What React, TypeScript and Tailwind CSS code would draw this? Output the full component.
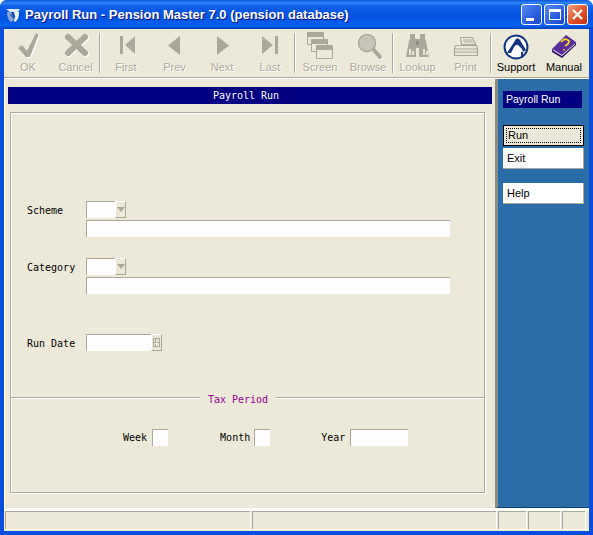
import type { ReactNode } from "react";

const mono = "font-['DejaVu_Sans_Mono',monospace] text-[10px] leading-[12px]";
const GREY = "#aca899";

function ToolItem({ x, w, label, on, children }: { x: number; w: number; label: string; on?: boolean; children: ReactNode }) {
  return (
    <div className="flex flex-col items-center" style={{ width: w }}>
      <svg width={w} height={32} viewBox={`${x} 30 ${w} 32`} className="shrink-0">
        {children}
      </svg>
      <span
        className={
          on
            ? "text-[11px] leading-[13px] whitespace-nowrap text-black"
            : "text-[11px] leading-[13px] whitespace-nowrap text-[#aca899] [text-shadow:1px_1px_0_#fff]"
        }
      >
        {label}
      </span>
    </div>
  );
}

function Sep() {
  return <div className="mt-[4px] h-[40px] w-[2px] shrink-0 border-l border-[#aca899] bg-white" />;
}

function Toolbar() {
  const check = "M18 49 L22 46 L27 52 L36 34 L38.500 36 L30 58 L26 58z";
  return (
    <div className="flex h-[48px] shrink-0 bg-[#ece9d8]">
      <ToolItem x={4} w={48} label="OK">
        <path d={check} fill="#fff" transform="translate(1 1)" />
        <path d={check} fill={GREY} />
      </ToolItem>
      <ToolItem x={52} w={47} label="Cancel">
        <path d="M68 38 L85 54 M85 38 L68 54" fill="none" stroke="#fff" strokeWidth="6" strokeLinecap="round" transform="translate(1 1)" />
        <path d="M68 38 L85 54 M85 38 L68 54" fill="none" stroke={GREY} strokeWidth="6" strokeLinecap="round" />
      </ToolItem>
      <Sep />
      <ToolItem x={101} w={50} label="First">
        <path d="M120 37h3v18h-3z M135 37v18l-10-9z" fill={GREY} />
      </ToolItem>
      <ToolItem x={151} w={47} label="Prev">
        <path d="M180 37v19l-12-9.5z" fill={GREY} />
      </ToolItem>
      <ToolItem x={198} w={48} label="Next">
        <path d="M217 37v19l12-9.5z" fill={GREY} />
      </ToolItem>
      <ToolItem x={246} w={48} label="Last">
        <path d="M262 37v18l11-9z M275 37h3v18h-3z" fill={GREY} />
      </ToolItem>
      <Sep />
      <ToolItem x={296} w={48} label="Screen">
        <g stroke={GREY} strokeWidth="1">
          <path d="M307.500 33.500h16v12h-16z" fill="#ece9d8" />
          <path d="M307.500 33.500h16v4h-16z" fill={GREY} />
          <path d="M311.500 40.500h16v12h-16z" fill="#ece9d8" />
          <path d="M311.500 40.500h16v4h-16z" fill={GREY} />
          <path d="M316.500 46.500h16v13h-16z" fill="#ece9d8" />
          <path d="M316.500 46.500h16v4h-16z" fill={GREY} />
        </g>
      </ToolItem>
      <ToolItem x={344} w={48} label="Browse">
        <path d="M374 51 L380 58" stroke="#fff" strokeWidth="4" strokeLinecap="round" transform="translate(1 1)" />
        <path d="M374 51 L380 58" stroke={GREY} strokeWidth="4" strokeLinecap="round" />
        <circle cx="367" cy="44" r="8.500" fill="#c8c5b6" stroke={GREY} strokeWidth="1.500" />
      </ToolItem>
      <Sep />
      <ToolItem x={395} w={47} label="Lookup">
        <path d="M411 35h5v5h5v-5h5v5l1 2 3 16h-10v-9h-3v9h-10l3-16 1-2z" fill={GREY} />
        <path d="M417 42h3v4h-3z" fill="#8f8b7c" />
        <path d="M410 50h2v6h-2z M413 52h2v4h-2z M424 50h2v6h-2z M427 52h2v4h-2z" fill="#ece9d8" />
      </ToolItem>
      <ToolItem x={442} w={49} label="Print">
        <path d="M461.500 38.500h12l3 7h-14z" fill="#ece9d8" stroke={GREY} strokeWidth="1.200" />
        <path d="M456.500 46.500h21l1 3v7h-23v-7z" fill="#ece9d8" stroke={GREY} strokeWidth="1.200" />
        <path d="M464 41h9M465 43h9M456 50h22M456 53h22" stroke={GREY} />
      </ToolItem>
      <Sep />
      <ToolItem x={492} w={48} label="Support" on>
        <circle cx="516" cy="48" r="11.500" fill="#fff" stroke="#12337f" strokeWidth="2" />
        <path d="M507 54 L516 40 Q518 38 520 41 L526 51 L523 53 L522 50 L518 46 Q516 45 514 48 L511 54z" fill="#12337f" />
        <path d="M521 53h2v6h-2z" fill="#12337f" />
      </ToolItem>
      <ToolItem x={540} w={48} label="Manual" on>
        <path d="M552 50 L566 36 L576 43 L562 56z" fill="#5b2d9c" />
        <path d="M552 50 L562 56 L576 43 V46 L562 59 L552 53z" fill="#2e1463" />
        <path d="M553 51 L562 56.500 L575 45" fill="none" stroke="#e8e0f0" />
        <path d="M561 43 Q565 38 569 42 Q569 45 565 47 M564 50 v1.500" fill="none" stroke="#f5d21f" strokeWidth="1.800" />
      </ToolItem>
    </div>
  );
}

function TitleBar() {
  return (
    <div className="flex h-[29px] shrink-0 items-center rounded-t-[7px] bg-[linear-gradient(180deg,#0a55d8_0%,#2f86fa_10%,#0d5fe8_22%,#0052e0_60%,#0463f0_88%,#003fc0_100%)] pl-[5px] pr-[5px]">
      <svg width="16" height="16" viewBox="0 0 16 16" className="shrink-0">
        <path d="M1 2h14l-2 3H5z" fill="#dfe8f6" />
        <path d="M2 5h4l3 8-3 2C3 13 2 9 2 5z" fill="#8ea8d4" />
        <path d="M9 5h5c0 5-1 8-4 10l-1-1c1-3 1-6 0-9z" fill="#f2f5fb" />
        <path d="M5 7l4 5M7 5l3 5" stroke="#1d3f94" strokeWidth="1" />
      </svg>
      <span className="ml-[4px] pt-[1px] font-['Liberation_Sans',sans-serif] text-[13px] font-bold whitespace-nowrap text-white [text-shadow:1px_1px_0_#0f1089]">
        Payroll Run - Pension Master 7.0 (pension database)
      </span>
      <div className="ml-auto flex gap-[2px]">
        <div className="relative h-[21px] w-[21px] rounded-[3px] border border-white bg-[linear-gradient(135deg,#5a8bf0,#2a5fe0_60%,#1c46c8)]">
          <div className="absolute bottom-[3px] left-[4px] h-[3px] w-[8px] bg-white" />
        </div>
        <div className="flex h-[21px] w-[21px] items-center justify-center rounded-[3px] border border-white bg-[linear-gradient(135deg,#5a8bf0,#2a5fe0_60%,#1c46c8)]">
          <div className="h-[11px] w-[12px] border border-t-[3px] border-white" />
        </div>
        <div className="flex h-[21px] w-[21px] items-center justify-center rounded-[3px] border border-white bg-[linear-gradient(135deg,#f0a080,#e0502a_55%,#c03010)]">
          <svg width="13" height="13" viewBox="0 0 13 13">
            <path d="M2 2 L11 11 M11 2 L2 11" stroke="#fff" strokeWidth="2.400" />
          </svg>
        </div>
      </div>
    </div>
  );
}

function Input({ w }: { w: string }) {
  return <div className={`h-[17px] border-t border-l border-[#aca899] bg-[#fefefe] ${w}`} />;
}

function ArrowBtn() {
  return (
    <div className="flex h-[17px] w-[11px] items-center justify-center border border-[#aca899] border-t-white border-l-white bg-[#ece9d8]">
      <div className="h-0 w-0 border-x-[4px] border-t-[5px] border-x-transparent border-t-[#aca899]" />
    </div>
  );
}

function ComboRow({ label, className }: { label: string; className: string }) {
  return (
    <div className={`flex ${className}`}>
      <span className={`${mono} w-[59px] pt-[4px] text-black`}>{label}</span>
      <div className="flex flex-col gap-[2px]">
        <div className="flex">
          <Input w="w-[29px]" />
          <ArrowBtn />
        </div>
        <Input w="w-[364px]" />
      </div>
    </div>
  );
}

function TaxField({ label, w, className }: { label: string; w: string; className: string }) {
  return (
    <div className={`flex items-center ${className}`}>
      <span className={`${mono} pt-[1px] text-black`}>{label}</span>
      <Input w={w} />
    </div>
  );
}

function Form() {
  return (
    <div className="flex min-w-0 flex-1 flex-col border-l border-white pt-[8px]">
      <div className="mx-[3px] flex h-[17px] items-center justify-center bg-[#000080] pr-[8px]">
        <span className={`${mono} text-white`}>Payroll Run</span>
      </div>
      <div className="mt-[8px] ml-[5px] flex h-[381px] w-[475px] flex-col border border-[#aca899] shadow-[inset_1px_1px_0_#fff,1px_1px_0_#fff]">
        <div className="h-[277px] pl-[16px]">
          <ComboRow label="Scheme" className="mt-[88px]" />
          <ComboRow label="Category" className="mt-[21px]" />
          <div className="mt-[40px] flex">
            <span className={`${mono} w-[59px] pt-[4px] text-black`}>Run Date</span>
            <Input w="w-[65px]" />
            <div className="flex h-[17px] w-[11px] items-center justify-center border border-[#aca899] border-t-white border-l-white">
              <div className="grid h-[9px] w-[7px] grid-cols-2 gap-[1px] border border-[#aca899]">
                <div className="border-r border-b border-[#aca899]" />
                <div className="border-b border-[#aca899]" />
                <div className="border-r border-[#aca899]" />
                <div />
              </div>
            </div>
          </div>
        </div>
        <div className="flex items-center">
          <div className="h-[2px] w-[189px] border-t border-[#aca899] bg-white" />
          <span className={`${mono} w-[76px] pt-[4px] text-center text-[#990099]`}>Tax Period</span>
          <div className="h-[2px] flex-1 border-t border-[#aca899] bg-white" />
        </div>
        <div className="mt-[23px] flex">
          <TaxField label="Week" w="ml-[5px] w-[16px]" className="ml-[112px]" />
          <TaxField label="Month" w="ml-[4px] w-[16px]" className="ml-[52px]" />
          <TaxField label="Year" w="ml-[5px] w-[58px]" className="ml-[51px]" />
        </div>
      </div>
    </div>
  );
}

function SideBtn({ label, className }: { label: string; className: string }) {
  return (
    <div className={`flex h-[21px] w-[81px] items-center bg-white pl-[4px] text-[11px] text-black shadow-[inset_-1px_-1px_0_#aca899] ${className}`}>
      {label}
    </div>
  );
}

function SidePanel() {
  return (
    <div className="flex w-[94px] shrink-0 flex-col border-b border-b-[#123f70] border-l-3 border-l-[#8e8c80] bg-[#2a6da8] pl-[5px]">
      <div className="mt-[12px] flex h-[17px] w-[79px] items-center bg-[#000080] pl-[3px] text-[10.5px] text-white">
        Payroll Run
      </div>
      <div className="mt-[17px] flex h-[21px] w-[81px] border border-black bg-[#ece9d8] p-[2px] text-[11px] text-black">
        <div className="flex flex-1 items-center border border-dotted border-black pl-[1px]">Run</div>
      </div>
      <SideBtn label="Exit" className="mt-[2px]" />
      <SideBtn label="Help" className="mt-[14px]" />
    </div>
  );
}

function StatusBar() {
  const panes = ["w-[245px]", "w-[244px]", "w-[28px]", "w-[32px]", "w-[23px]"];
  return (
    <div className="flex h-[23px] shrink-0 gap-[2px] border-t-3 border-t-white bg-[#ece9d8] pl-[1px]">
      {panes.map((w) => (
        <div key={w} className={`h-[18px] border-t border-l border-[#aca899] shadow-[1px_1px_0_#fff] ${w}`} />
      ))}
    </div>
  );
}

export default function App() {
  return (
    <div className="h-[535px] w-[593px] overflow-hidden bg-white font-['Liberation_Sans',sans-serif]">
      <div className="flex h-full flex-col rounded-t-[7px] bg-[#0a4ddc]">
        <TitleBar />
        <div className="mx-[4px] flex min-h-0 flex-1 flex-col bg-[#ece9d8]">
          <Toolbar />
          <div className="h-[2px] shrink-0 border-t border-[#aca899] bg-white" />
          <div className="flex min-h-0 flex-1">
            <Form />
            <SidePanel />
          </div>
          <StatusBar />
        </div>
        <div className="h-[4px] shrink-0" />
      </div>
    </div>
  );
}
